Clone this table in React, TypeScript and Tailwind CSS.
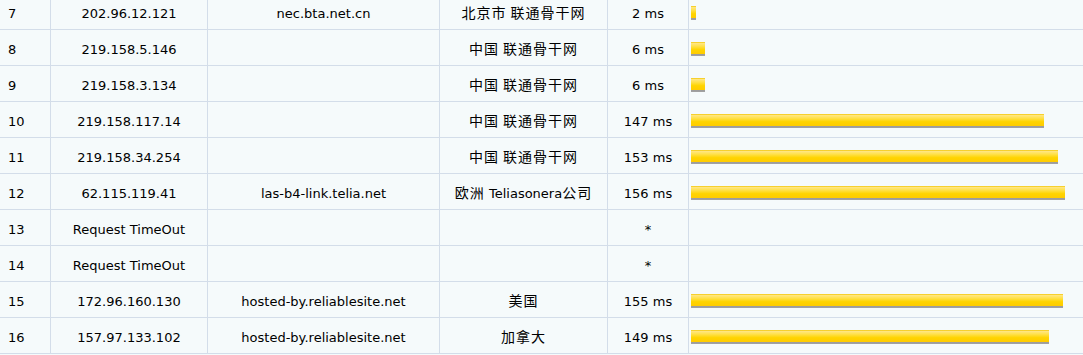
import React from 'react';

interface Hop {
  no: number;
  ip: string;
  host: string;
  geo: string;
  ms: number | null;
}

const hops: Hop[] = [
  { no: 7, ip: '202.96.12.121', host: 'nec.bta.net.cn', geo: '北京市 联通骨干网', ms: 2 },
  { no: 8, ip: '219.158.5.146', host: '', geo: '中国 联通骨干网', ms: 6 },
  { no: 9, ip: '219.158.3.134', host: '', geo: '中国 联通骨干网', ms: 6 },
  { no: 10, ip: '219.158.117.14', host: '', geo: '中国 联通骨干网', ms: 147 },
  { no: 11, ip: '219.158.34.254', host: '', geo: '中国 联通骨干网', ms: 153 },
  { no: 12, ip: '62.115.119.41', host: 'las-b4-link.telia.net', geo: '欧洲 Teliasonera公司', ms: 156 },
  { no: 13, ip: 'Request TimeOut', host: '', geo: '', ms: null },
  { no: 14, ip: 'Request TimeOut', host: '', geo: '', ms: null },
  { no: 15, ip: '172.96.160.130', host: 'hosted-by.reliablesite.net', geo: '美国', ms: 155 },
  { no: 16, ip: '157.97.133.102', host: 'hosted-by.reliablesite.net', geo: '加拿大', ms: 149 },
];

const cell = 'h-[36px] border-b border-r border-[#d3dde9] flex items-center justify-center pt-[4px] whitespace-nowrap';

// chinese runs are set a bit wider than the latin text in the original
function Geo({ text }: { text: string }) {
  const parts = text.split(/([\u4e00-\u9fff]+)/).filter(Boolean);
  return (
    <span>
      {parts.map((p, i) =>
        /[\u4e00-\u9fff]/.test(p) ? (
          <span key={i} className="text-[14px] leading-none tracking-[1px]">{p}</span>
        ) : (
          <span key={i}>{p}</span>
        )
      )}
    </span>
  );
}

export default function App() {
  return (
    <div
      className="w-[1083px] h-[355px] overflow-hidden bg-[#f5fafb] text-[13px] text-black"
      style={{ fontFamily: '"DejaVu Sans", "Noto Sans CJK SC", sans-serif' }}
    >
      <div className="-mt-[6px] grid grid-cols-[51px_157px_232px_168px_81px_1fr]">
        {hops.map((h) => (
          <React.Fragment key={h.no}>
            <div className={`${cell} !justify-start pl-2`}>{h.no}</div>
            <div className={cell}>{h.ip}</div>
            <div className={cell}>{h.host}</div>
            <div className={cell}>
              <Geo text={h.geo} />
            </div>
            <div className={cell}>{h.ms === null ? '*' : `${h.ms} ms`}</div>
            <div className="h-[36px] border-b border-[#d3dde9] pl-[2px] pt-[12px]">
              {h.ms !== null && (
                <div
                  className="h-[14px] bg-[linear-gradient(to_bottom,#f2c400_0%,#ffe680_10%,#ffe14a_30%,#ffd400_55%,#ffcc00_84%,#9b9b9b_86%,#a3a3a3_100%)]"
                  style={{ width: Math.round(h.ms * 2.4) }}
                />
              )}
            </div>
          </React.Fragment>
        ))}
      </div>
    </div>
  );
}
